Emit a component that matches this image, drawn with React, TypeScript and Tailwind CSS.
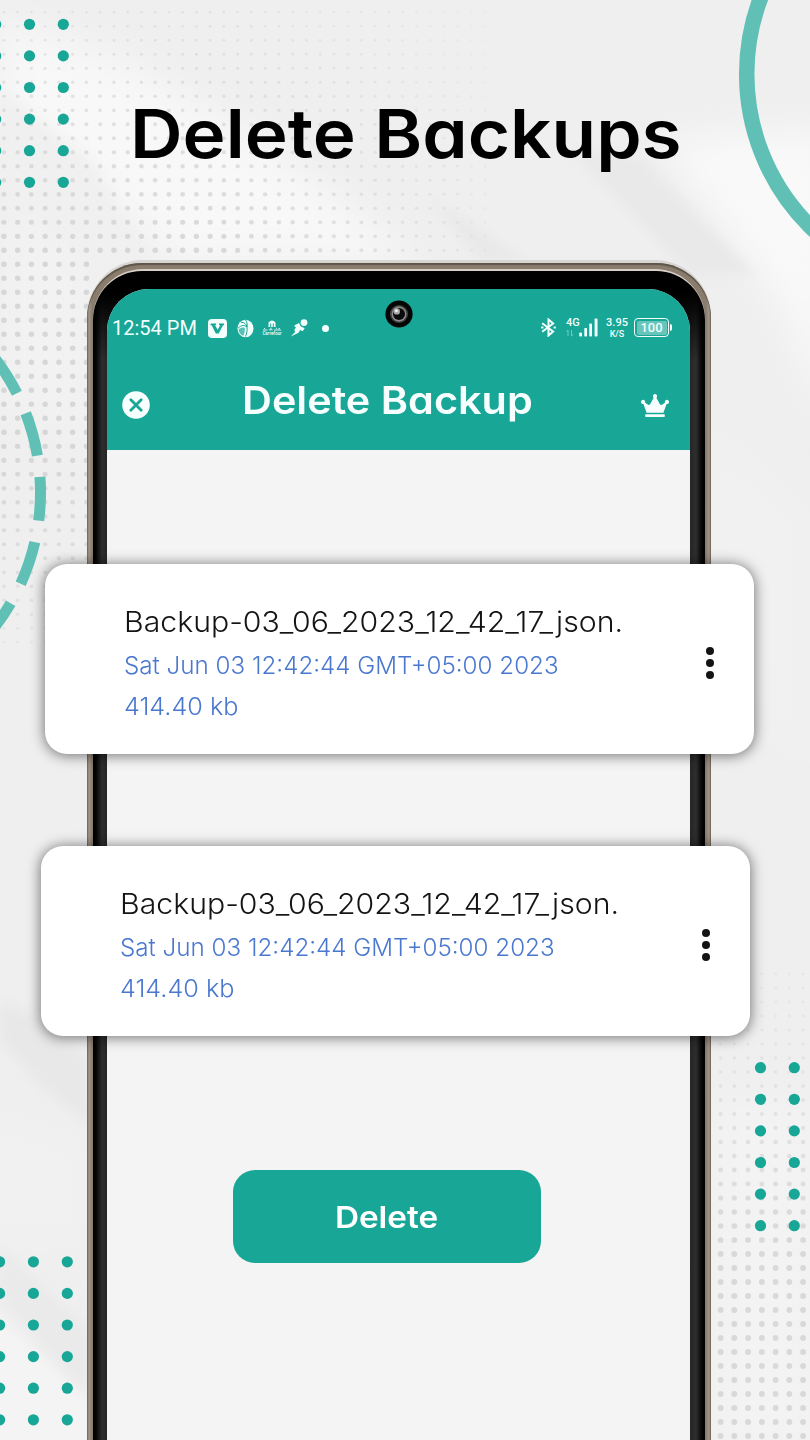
import React from "react";
import { FaCrown } from "react-icons/fa";

const HEADING = "font-['Inter','Liberation_Sans',sans-serif] font-semibold [font-feature-settings:'cv11']";

const range = (n: number) => Array.from({ length: n }, (_, i) => i);

function TealDots({ xs, y0 }: { xs: number[]; y0: number }) {
  return (
    <g fill="#18a697">
      {xs.map((x) => range(6).map((r) => <circle key={`${x}-${r}`} cx={x} cy={y0 + r * 31.6} r="5.6" />))}
    </g>
  );
}

function Halftone() {
  const dots: React.ReactElement[] = [];
  for (let r = 0; r < 46; r++) {
    for (let c = 0; c < 38; c++) {
      const x = 3.9 + c * 13.75;
      const y = 12.3 + r * 14;
      if (y > 262 && x > 88) continue;
      const fadeX = Math.max(0, 1 - Math.max(0, x - 210) / 300);
      const rise = Math.min(1, Math.max(0, (y - 20) / 230));
      const fall = y > 440 ? Math.max(0, 1 - (y - 440) / 230) : 1;
      const k = fadeX * fall;
      if (k < 0.08) continue;
      dots.push(<circle key={`a${r}-${c}`} cx={x} cy={y} r={1.3 + rise * 1.4 * k} opacity={(0.4 + 0.35 * rise) * Math.sqrt(k)} />);
    }
  }
  for (let r = 0; r < 34; r++) {
    for (let c = 0; c < 7; c++) {
      const y = 974 + r * 14;
      const k = Math.min(1, Math.max(0.12, (y - 980) / 270));
      dots.push(<circle key={`b${r}-${c}`} cx={720.6 + c * 13.75} cy={y} r={1.2 + k * 1.7} opacity={0.2 + k * 0.5} />);
    }
  }
  return <g fill="#cdcdcd">{dots}</g>;
}

function Backdrop() {
  return (
    <svg className="absolute inset-0" width="810" height="1440" viewBox="0 0 810 1440" aria-hidden="true">
      <defs>
        <filter id="soft" x="-20%" y="-20%" width="140%" height="140%">
          <feGaussianBlur stdDeviation="18" />
        </filter>
        <filter id="soft2" x="-20%" y="-20%" width="140%" height="140%">
          <feGaussianBlur stdDeviation="6" />
        </filter>
      </defs>
      <rect width="810" height="1440" fill="#efefef" />
      <g filter="url(#soft)">
        <polygon points="0,20 120,60 260,140 420,262 180,262 0,110" fill="#f8f8f8" />
        <polygon points="660,140 830,130 830,420 780,300" fill="#f9f9f9" />
        <polygon points="0,200 90,240 90,440 0,400" fill="#f2f2f2" />
        <polygon points="700,420 810,520 810,780 700,640" fill="#f1f1f1" />
        <polygon points="-20,1110 90,1150 90,1240 -20,1240" fill="#f1f1f1" />
        <rect x="711" y="1100" width="110" height="360" fill="#f3f3f3" />
      </g>
      <g filter="url(#soft2)">
        <polygon points="570,150 640,155 755,275 690,275" fill="#e9e9e9" />
        <polygon points="430,200 460,215 530,262 480,262" fill="#e9e9e9" />
        <polygon points="0,90 90,160 150,262 90,262 0,180" fill="#f0f0f0" />
        <polygon points="0,1000 40,1020 90,1060 90,1125 40,1085 0,1040" fill="#e8e8e8" />
        <polygon points="0,1245 90,1330 90,1400 0,1300" fill="#eaeaea" />
        <polygon points="-10,1310 90,1400 90,1450 -10,1450" fill="#f4f4f4" />
      </g>
      <Halftone />
      <TealDots xs={[-4.3, 29.5, 63.3]} y0={24.3} />
      <TealDots xs={[-0.4, 33.4, 67.3]} y0={1261.8} />
      <TealDots xs={[760.5, 794.3]} y0={1067.7} />
      <circle cx="961.6" cy="74" r="214.9" fill="none" stroke="#60c0b5" strokeWidth="15.5" />
      <circle
        cx="-179.5"
        cy="492.5"
        r="220"
        fill="none"
        stroke="#60c0b5"
        strokeWidth="11"
        strokeDasharray="44 21.82"
        transform="rotate(-4.1 -179.5 492.5)"
      />
    </svg>
  );
}

function StatusBar() {
  return (
    <div className="flex h-6 items-center pl-[5px] text-[#f2fffd] font-['Roboto',sans-serif]">
      <span className="w-[96px] whitespace-nowrap text-[20px] leading-6">12:54 PM</span>
      <svg width="19" height="19" viewBox="0 0 19 19">
        <rect width="19" height="19" rx="4" fill="currentColor" />
        <path d="M2.600 4.500h5.400v1.500l-1 .3 2.700 4.500 2.500-4.500-1.200-.3V4.500h5v1.500l-1.200.4L10.700 14.500H7.800L3.800 6.600l-1.200-.4z" fill="#18a697" />
      </svg>
      <svg className="ml-2.5" width="17" height="19" viewBox="0 0 17 19">
        <ellipse cx="8.500" cy="9.500" rx="8" ry="8.800" fill="currentColor" />
        <path d="M3.800 3.200C7 3.200 9.600 5 10 8c.5 3-.2 6.500-1.500 9.500M10 8C7.500 5.600 4 6.200 1.200 9M8.500 1c1.500 1.500 2 4.500 1.500 7" fill="none" stroke="#18a697" strokeWidth="1" />
        <path d="M1.600 10.500C3.800 8.500 6 8 7.800 9c.2 3-.4 5.500-1.400 7.800C3.500 16 1.800 13.500 1.600 10.500z" fill="#18a697" opacity=".7" />
      </svg>
      <div className="ml-2 flex h-[17px] w-5 flex-col items-center">
        <svg width="20" height="11" viewBox="0 0 20 11" fill="currentColor">
          <path d="M6.500 7V2.500Q10-1.500 13.500 2.500V7h-1.700V3.500h-1V7H9.200V3.500h-1V7z" />
          <path d="M1 10h4.500M7 9.800h3.500M12 10h7M2 8.500h1M8 8.300h1.500M14 8.300h1M16.500 8.600h1.500" stroke="currentColor" strokeWidth=".9" />
        </svg>
        <span className="text-[4.500px] font-medium leading-[6px]">Carrefour</span>
      </div>
      <svg className="ml-[8px] mb-px" width="18" height="18" viewBox="0 0 19 19" fill="currentColor">
        <circle cx="14.800" cy="3.800" r="3.600" />
        <path d="M4.500 6.800l5-2.600 1.800 3.400 4.200 2.200-2.200 3-2.600-1.200-1.700 2.900L.8 18.400l4.600-4.600-.8-2.200 2-3.400-1.200.4z" />
      </svg>
      <span className="ml-3.5 size-[7px] rounded-full bg-current" />

      <div className="-mt-[1px] ml-[212px] flex items-center">
        <svg width="15" height="19" viewBox="0 0 15 19" fill="none" stroke="currentColor" strokeWidth="2">
          <path d="M1.200 5.200l10.900 8.300-4.600 4V1.500l4.600 4-10.900 8.300" />
          <path d="M12.600 9.500h2.200M.2 9.500h2.200" />
        </svg>
        <div className="relative ml-[10px] h-[19px] w-[34px]">
          <span className="absolute left-0 top-0 text-[11px] font-medium leading-[10px]">4G</span>
          <svg width="34" height="19" viewBox="0 0 34 19" fill="currentColor">
            <path d="M2 18v-6M.4 13.600L2 12M5.500 12v6M7.200 16.400L5.500 18" stroke="currentColor" strokeWidth="1" opacity=".4" />
            <rect x="13.300" y="14.500" width="2.700" height="4" rx=".8" />
            <rect x="18.300" y="10" width="2.700" height="8.500" rx=".8" />
            <rect x="23.300" y="5.500" width="2.700" height="13" rx=".8" />
            <rect x="28.600" y=".5" width="2.900" height="18" rx=".8" />
          </svg>
        </div>
        <div className="ml-[5px] flex w-6 flex-col items-center font-medium">
          <span className="text-[11px] leading-[12px]">3.95</span>
          <span className="text-[9px] leading-[10px]">K/S</span>
        </div>
        <div className="ml-[5px] flex h-[19px] w-[35px] items-center justify-center rounded-[4px] border-[1.500px] border-current p-[1.500px]">
          <span className="flex h-full w-full items-center justify-center rounded-[2px] bg-white/35 text-[13px] font-medium leading-none">100</span>
        </div>
        <span className="ml-px h-[7px] w-[2px] rounded-r bg-current" />
      </div>
    </div>
  );
}

function Camera() {
  return (
    <svg className="absolute left-[278px] top-[11px]" width="28" height="28" viewBox="0 0 28 28">
      <circle cx="14" cy="14" r="13.600" fill="#050505" />
      <circle cx="14" cy="14" r="9" fill="#444" />
      <circle cx="14" cy="14" r="7.400" fill="#8d8d8d" />
      <circle cx="14" cy="14" r="6" fill="#0b0b0b" />
      <circle cx="11.800" cy="11.400" r="3.200" fill="#a5a5a5" />
      <circle cx="11.400" cy="10.800" r="1.500" fill="#f3f3f3" />
    </svg>
  );
}

function BackupCard({ className }: { className: string }) {
  return (
    <article
      className={`flex h-[190px] w-[709px] shrink-0 items-center justify-between rounded-[22px] bg-white pl-[79px] pr-[40px] shadow-[0_1px_13px_1px_rgba(0,0,0,0.5)] font-['Inter','Liberation_Sans',sans-serif] ${className}`}
    >
      <div className="flex flex-col whitespace-nowrap pt-2">
        <p className="origin-left scale-x-[1.080] text-[28px] font-light leading-[43px] text-[#141414]">Backup-03_06_2023_12_42_17_json.</p>
        <p className="origin-left scale-x-[1.008] text-[24px] font-light leading-[43px] text-[#4b78cf]">Sat Jun 03 12:42:44 GMT+05:00 2023</p>
        <p className="origin-left scale-x-[1.050] text-[24px] font-light leading-[39px] text-[#4b78cf]">414.40 kb</p>
      </div>
      <div className="flex flex-col gap-1 pt-2">
        {range(3).map((i) => (
          <span key={i} className="size-[8.300px] rounded-full bg-[#141414]" />
        ))}
      </div>
    </article>
  );
}

export default function App() {
  return (
    <main className="relative h-[1440px] w-[810px] overflow-hidden bg-[#efefef]">
      <Backdrop />
      <div className="relative flex flex-col pt-[92px]">
        <h1 className={`mb-[84px] ml-[130px] origin-left scale-x-[1.087] whitespace-nowrap text-[67px] leading-[84px] text-black ${HEADING}`}>
          Delete Backups
        </h1>

        <section className="mx-[87px] w-[624px] rounded-t-[56px] bg-[#d8d6d2] pt-[3px]">
          <div className="rounded-t-[55px] bg-[linear-gradient(90deg,#6e6558_0,#a2968a_2px,#8a7d6e_5px,#8a7d6e_619px,#a2968a_622px,#6e6558_624px)] px-[6px] pt-1.5 shadow-[inset_0_2px_1px_#5e564a]">
            <div className="rounded-t-[50px] bg-[#d8cfc6] pt-0.5">
              <div className="h-[1170px] rounded-t-[49px] bg-[linear-gradient(180deg,#000_0,#000_22px,transparent_90px),linear-gradient(90deg,#000_0,#050505_3px,#2e2e2e_9px,#262626_14px,#262626_597px,#2e2e2e_603px,#050505_609px,#000_612px)] pl-[14px] pr-[15px] pt-[18px]">
                <div className="flex h-[1152px] flex-col rounded-t-[42px] bg-[#f4f4f4]">
                  <header className="relative h-[161px] shrink-0 rounded-t-[42px] bg-[#18a697] pt-[27px]">
                    <Camera />
                    <StatusBar />
                    <div className="mt-[33px] flex items-center pl-[15px] text-[#f7fffe]">
                      <svg className="mt-[9px]" width="28" height="28" viewBox="0 0 28 28">
                        <circle cx="14" cy="14" r="13.800" fill="currentColor" />
                        <path d="M8.800 8.800l10.400 10.400M19.200 8.800L8.800 19.200" stroke="#18a697" strokeWidth="2.800" strokeLinecap="round" />
                      </svg>
                      <h2 className={`ml-[92px] w-[399px] origin-left scale-x-[1.075] whitespace-nowrap text-[38.500px] leading-[54px] ${HEADING}`}>
                        Delete Backup
                      </h2>
                      <FaCrown className="mt-[10px] h-[23px] w-[28px]" preserveAspectRatio="none" />
                    </div>
                  </header>
                  <BackupCard className="-ml-[62px] mt-[114px]" />
                  <BackupCard className="-ml-[66px] mt-[92px]" />
                  <button className={`ml-[126px] mt-[134px] h-[93px] w-[308px] shrink-0 rounded-[22px] bg-[#18a697] text-[30px] text-white ${HEADING}`}>
                    <span className="inline-block scale-x-[1.110] pt-0.5">Delete</span>
                  </button>
                </div>
              </div>
            </div>
          </div>
        </section>
      </div>
    </main>
  );
}
